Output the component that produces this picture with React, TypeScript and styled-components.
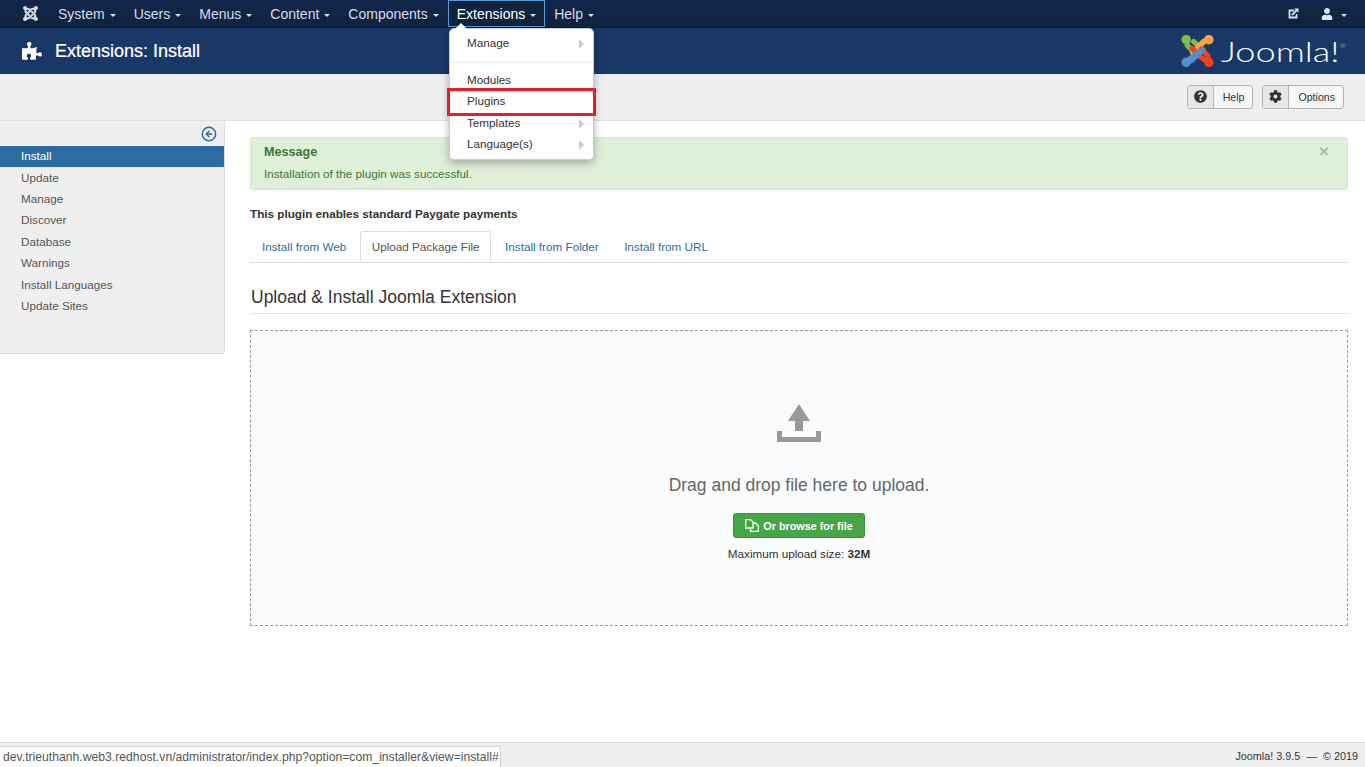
import styled, { createGlobalStyle } from 'styled-components';
import { FaCog, FaJoomla, FaPuzzlePiece, FaQuestionCircle, FaUser } from 'react-icons/fa';
import { CircleArrowLeft } from 'lucide-react';

const NAV_ITEMS = ['System', 'Users', 'Menus', 'Content', 'Components', 'Extensions', 'Help'];
const SIDE_ITEMS = ['Install', 'Update', 'Manage', 'Discover', 'Database', 'Warnings', 'Install Languages', 'Update Sites'];
const TABS = ['Install from Web', 'Upload Package File', 'Install from Folder', 'Install from URL'];

function JoomlaLogo() {
  return (
    <svg width="35" height="34" viewBox="0 0 36 36" fill="none" strokeWidth="5.5" strokeLinecap="round" strokeLinejoin="round">
      <path d="M24 17 L14 8" stroke="#7ac143" />
      <circle cx="6" cy="6" r="5" fill="#7ac143" />
      <path d="M7 8 L7 12 L14 19" stroke="#7ac143" />
      <path d="M13 20 L24 8" stroke="#f9a541" />
      <circle cx="30" cy="6" r="5" fill="#f9a541" />
      <path d="M18 15 L26 7 L29 7" stroke="#f9a541" />
      <path d="M12 15 L22 25 L28 29" stroke="#f44321" />
      <circle cx="30" cy="30" r="5" fill="#f44321" />
      <path d="M29 27 L29 23 L22 16" stroke="#f44321" />
      <path d="M23 17 L12 28 L8 29" stroke="#5091cd" />
      <circle cx="6" cy="30" r="5" fill="#5091cd" />
      <path d="M16 21 L8 28" stroke="#5091cd" />
    </svg>
  );
}

function NewTabIcon() {
  return (
    <svg width="11" height="11" viewBox="0 0 11 11" fill="none">
      <path d="M6 2.5H1.5V9.5H8.5V6" stroke="#dfe4ec" strokeWidth="1.8" />
      <path d="M3.8 7.2L8.5 2.5" stroke="#dfe4ec" strokeWidth="1.8" />
      <path d="M6.2 0.5H10.5V4.8Z" fill="#dfe4ec" />
    </svg>
  );
}

function UploadIcon() {
  return (
    <svg width="44" height="38" viewBox="0 0 44 38" fill="#999">
      <path d="M22 0L33 17H26V27H18V17H11Z" />
      <path d="M0 27H5V33H39V27H44V38H0Z" />
    </svg>
  );
}

function CopyIcon() {
  return (
    <svg width="14" height="13" viewBox="0 0 14 13" fill="none" stroke="#fff" strokeWidth="1.3">
      <path d="M0.7 0.7H5.5L8 3V9H0.7Z" />
      <path d="M8 4H10.5L13.3 6.8V12.3H5.5V9" />
    </svg>
  );
}

function App() {
  return (
    <Page>
      <GlobalStyle />
      <NavBar>
        <Brand>
          <FaJoomla size={17} color="#d8dde6" />
        </Brand>
        {NAV_ITEMS.map((item) => (
          <NavItem key={item} $active={item === 'Extensions'}>
            {item}
            <Caret />
          </NavItem>
        ))}
        <NavRight>
          <NewTabIcon />
          <UserMenu>
            <FaUser size={12} color="#dfe4ec" />
            <Caret />
          </UserMenu>
        </NavRight>
      </NavBar>

      <Header>
        <FaPuzzlePiece size={20} color="#fff" />
        <PageTitle>Extensions: Install</PageTitle>
        <LogoBlock>
          <JoomlaLogo />
          <LogoWord>
            Joomla!<sup>®</sup>
          </LogoWord>
        </LogoBlock>
      </Header>

      <SubHead>
        <ToolButton>
          <ToolIcon>
            <FaQuestionCircle size={13} color="#333" />
          </ToolIcon>
          <ToolLabel>Help</ToolLabel>
        </ToolButton>
        <ToolButton>
          <ToolIcon>
            <FaCog size={13} color="#333" />
          </ToolIcon>
          <ToolLabel>Options</ToolLabel>
        </ToolButton>
      </SubHead>

      <Body>
        <Sidebar>
          <Collapse>
            <CircleArrowLeft size={16} color="#2d6ca2" strokeWidth={2.2} />
          </Collapse>
          {SIDE_ITEMS.map((item) => (
            <SideItem key={item} $active={item === 'Install'}>
              {item}
            </SideItem>
          ))}
        </Sidebar>

        <Content>
          <Alert>
            <AlertTitle>Message</AlertTitle>
            <AlertText>Installation of the plugin was successful.</AlertText>
            <AlertClose>×</AlertClose>
          </Alert>
          <PluginNote>This plugin enables standard Paygate payments</PluginNote>
          <Tabs>
            {TABS.map((tab) => (
              <Tab key={tab} $active={tab === 'Upload Package File'}>
                {tab}
              </Tab>
            ))}
          </Tabs>
          <Legend>Upload &amp; Install Joomla Extension</Legend>
          <DropZone>
            <UploadIcon />
            <DropText>Drag and drop file here to upload.</DropText>
            <BrowseButton>
              <CopyIcon />
              Or browse for file
            </BrowseButton>
            <MaxSize>
              Maximum upload size: <strong>32M</strong>
            </MaxSize>
          </DropZone>
        </Content>
      </Body>

      <Footer>Joomla! 3.9.5 &nbsp;— &nbsp;© 2019</Footer>

      <DropMenu>
        <MenuEntry $sub>Manage</MenuEntry>
        <MenuDivider />
        <MenuEntry>Modules</MenuEntry>
        <MenuEntry>Plugins</MenuEntry>
        <MenuEntry $sub>Templates</MenuEntry>
        <MenuEntry $sub>Language(s)</MenuEntry>
      </DropMenu>
      <Highlight />
      <StatusUrl>dev.trieuthanh.web3.redhost.vn/administrator/index.php?option=com_installer&amp;view=install#</StatusUrl>
    </Page>
  );
}

export default App;

const GlobalStyle = createGlobalStyle`
  html, body {
    margin: 0;
    padding: 0;
    background: #fff;
  }
  * {
    box-sizing: border-box;
  }
`;

const Page = styled.div`
  position: relative;
  display: flex;
  flex-direction: column;
  height: 767px;
  overflow: hidden;
  font-family: 'Liberation Sans', Arial, sans-serif;
  font-size: 11.7px;
  color: #333;
`;

const NavBar = styled.nav`
  display: flex;
  align-items: stretch;
  height: 28px;
  padding-right: 18px;
  background: linear-gradient(#11264a, #10233f);
  border-bottom: 1px solid #0d1c35;
`;

const Brand = styled.div`
  display: flex;
  align-items: center;
  width: 49px;
  padding-left: 22px;
`;

const NavItem = styled.div<{ $active?: boolean }>`
  position: relative;
  display: flex;
  align-items: center;
  height: 27px;
  padding: 0 8px;
  font-size: 14px;
  color: ${({ $active }) => ($active ? '#fff' : '#d8dde6')};
  background: ${({ $active }) => ($active ? '#10233f' : 'transparent')};
  border: 1px solid ${({ $active }) => ($active ? '#5a9bd4' : 'transparent')};
`;

const Caret = styled.span`
  width: 0;
  height: 0;
  margin-left: 5px;
  margin-top: 3px;
  border-top: 3px solid #d8dde6;
  border-left: 3.5px solid transparent;
  border-right: 3.5px solid transparent;
`;

const NavRight = styled.div`
  display: flex;
  align-items: center;
  gap: 22px;
  margin-left: auto;
`;

const UserMenu = styled.div`
  display: flex;
  align-items: center;
  gap: 3px;
`;

const Header = styled.header`
  display: flex;
  align-items: center;
  gap: 13px;
  height: 46px;
  padding: 0 0 0 22px;
  background: #1a3867;
`;

const PageTitle = styled.h1`
  margin: 0;
  font-size: 18px;
  font-weight: 400;
  color: #fff;
  -webkit-text-stroke: 0.2px #fff;
`;

const LogoBlock = styled.div`
  display: flex;
  align-items: center;
  gap: 6px;
  margin-left: auto;
  padding-right: 24px;
`;

const LogoWord = styled.span`
  display: inline-block;
  margin-right: 27px;
  font-family: 'Lato', 'Open Sans', sans-serif;
  font-size: 27px;
  font-weight: 300;
  color: #fff;
  transform: scaleX(1.34);
  transform-origin: left center;
  sup {
    font-size: 6px;
    vertical-align: 14px;
    line-height: 0;
    color: #ccd;
  }
`;

const SubHead = styled.div`
  display: flex;
  align-items: center;
  justify-content: flex-end;
  gap: 9px;
  height: 47px;
  padding: 0 21px 1px 0;
  background: #efefef;
  border-bottom: 1px solid #e0e0e0;
`;

const ToolButton = styled.div`
  display: flex;
  align-items: stretch;
  height: 24px;
  background: #f5f5f5;
  border: 1px solid #b3b3b3;
  border-radius: 3px;
`;

const ToolIcon = styled.span`
  display: flex;
  align-items: center;
  justify-content: center;
  width: 26px;
  background: #e6e6e6;
  border-right: 1px solid #b3b3b3;
`;

const ToolLabel = styled.span`
  display: flex;
  align-items: center;
  padding: 0 8px 0 9px;
  font-size: 10.6px;
`;

const Body = styled.div`
  display: flex;
  flex: 1;
  min-height: 0;
`;

const Sidebar = styled.aside`
  flex: none;
  width: 225px;
  height: 233px;
  background: #efefef;
  border-right: 1px solid #dcdcdc;
  border-bottom: 1px solid #dcdcdc;
  border-bottom-right-radius: 3px;
`;

const Collapse = styled.div`
  display: flex;
  justify-content: flex-end;
  align-items: center;
  height: 25px;
  padding-right: 7px;
`;

const SideItem = styled.div<{ $active?: boolean }>`
  display: flex;
  align-items: center;
  height: 21.4px;
  padding: 0 0 2px 21px;
  color: ${({ $active }) => ($active ? '#fff' : '#555')};
  background: ${({ $active }) => ($active ? '#2d6ca2' : 'transparent')};
`;

const Content = styled.main`
  flex: 1;
  min-width: 0;
  padding: 16px 17px 0 25px;
`;

const Alert = styled.div`
  position: relative;
  height: 53px;
  padding: 7px 13px;
  background: #dff0d8;
  border: 1px solid #d6e9c6;
  border-radius: 3px;
  color: #3c763d;
`;

const AlertTitle = styled.div`
  font-size: 12.6px;
  font-weight: 700;
  line-height: 15px;
`;

const AlertText = styled.div`
  margin-top: 7px;
  line-height: 14px;
`;

const AlertClose = styled.span`
  position: absolute;
  top: 5px;
  right: 18px;
  font-size: 17px;
  font-weight: 700;
  line-height: 18px;
  color: #a8bda8;
`;

const PluginNote = styled.p`
  margin: 17px 0 0;
  font-weight: 700;
  line-height: 14px;
`;

const Tabs = styled.div`
  display: flex;
  gap: 2px;
  margin-top: 10px;
  border-bottom: 1px solid #ddd;
`;

const Tab = styled.div<{ $active?: boolean }>`
  height: 31px;
  margin-bottom: ${({ $active }) => ($active ? '-1px' : '0')};
  padding: 0 10.5px 0 11px;
  line-height: 30px;
  color: ${({ $active }) => ($active ? '#555' : '#2d6ca2')};
  background: ${({ $active }) => ($active ? '#fff' : 'transparent')};
  border: 1px solid ${({ $active }) => ($active ? '#ddd' : 'transparent')};
  border-bottom-color: ${({ $active }) => ($active ? '#fff' : 'transparent')};
  border-radius: 3px 3px 0 0;
`;

const Legend = styled.h2`
  margin: 23px 0 0;
  padding: 0 0 5px 1px;
  font-size: 17.5px;
  font-weight: 400;
  line-height: 22px;
  color: #333;
  border-bottom: 1px solid #e5e5e5;
`;

const DropZone = styled.div`
  display: flex;
  flex-direction: column;
  align-items: center;
  height: 296px;
  margin-top: 16px;
  padding-top: 73px;
  background: #fafbfd;
  border: 1px dashed #999;
`;

const DropText = styled.div`
  margin-top: 32px;
  font-size: 17.5px;
  line-height: 22px;
  color: #666;
`;

const BrowseButton = styled.div`
  display: flex;
  align-items: center;
  gap: 4px;
  height: 25px;
  margin-top: 17px;
  padding: 0 11px;
  font-size: 10.8px;
  font-weight: 700;
  color: #fff;
  background: #46a546;
  border: 1px solid #3d8f3d;
  border-radius: 3px;
`;

const MaxSize = styled.div`
  margin-top: 9px;
  line-height: 14px;
`;

const Footer = styled.footer`
  flex: none;
  height: 25px;
  padding-right: 7px;
  font-size: 10.8px;
  line-height: 27px;
  text-align: right;
  background: #efefef;
  border-top: 1px solid #dcdcdc;
`;

const DropMenu = styled.div`
  position: absolute;
  top: 28px;
  left: 449px;
  width: 145px;
  height: 132px;
  padding-top: 4.4px;
  background: #fff;
  border: 1px solid #ccc;
  border-radius: 5px;
  box-shadow: 0 3px 8px rgba(0, 0, 0, 0.3);
  &::before {
    content: '';
    position: absolute;
    top: -6px;
    left: 5px;
    border-bottom: 6px solid #fff;
    border-left: 6px solid transparent;
    border-right: 6px solid transparent;
  }
`;

const MenuEntry = styled.div<{ $sub?: boolean }>`
  position: relative;
  height: 21.5px;
  padding-left: 17px;
  line-height: 20px;
  color: #333;
  &::after {
    content: '';
    display: ${({ $sub }) => ($sub ? 'block' : 'none')};
    position: absolute;
    top: 6px;
    right: 9px;
    border-left: 5px solid #ccc;
    border-top: 5px solid transparent;
    border-bottom: 5px solid transparent;
  }
`;

const MenuDivider = styled.div`
  height: 1px;
  margin: 7px 1px 7px;
  background: #e9e9e9;
`;

const Highlight = styled.div`
  position: absolute;
  top: 88px;
  left: 447px;
  width: 149px;
  height: 28px;
  border: 3px solid #ed1c24;
`;

const StatusUrl = styled.div`
  position: absolute;
  bottom: 0;
  left: 0;
  height: 21px;
  padding: 0 1px 0 3px;
  font-size: 12.2px;
  line-height: 20px;
  color: #555;
  background: #fff;
  border: 1px solid #d4d4d4;
  border-left: 0;
  border-bottom: 0;
  border-top-right-radius: 3px;
`;
